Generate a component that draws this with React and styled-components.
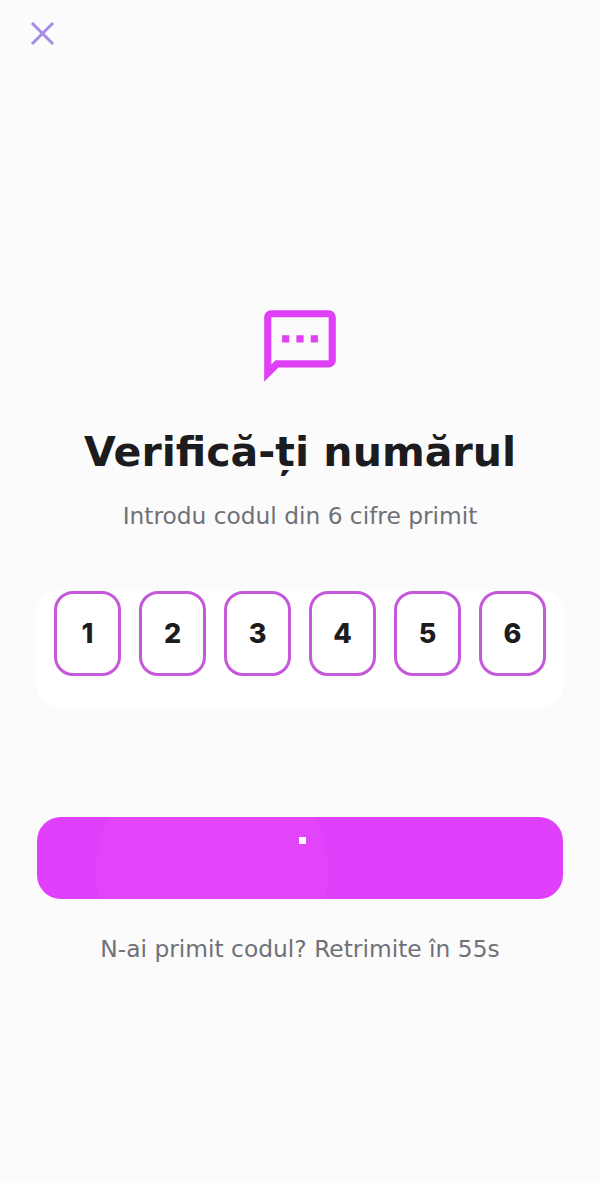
import styled, { createGlobalStyle } from 'styled-components';

const GlobalStyle = createGlobalStyle`
  html, body {
    margin: 0;
    padding: 0;
    background: #fbfbfc;
  }
`;

const Screen = styled.div`
  width: 600px;
  height: 1182px;
  overflow: hidden;
  display: flex;
  flex-direction: column;
  align-items: center;
  background: #fbfbfc;
  font-family: 'DejaVu Sans', sans-serif;
`;

const TopBar = styled.div`
  align-self: stretch;
  height: 303px;
  padding: 21px 0 0 30px;
  box-sizing: border-box;
`;

const CloseButton = styled.button`
  display: block;
  width: 25px;
  height: 25px;
  padding: 0;
  border: 0;
  background: none;
`;

const Title = styled.h1`
  margin: 39px 0 0;
  font-size: 41.1px;
  line-height: 48px;
  font-weight: 700;
  color: #1c1c1e;
`;

const Subtitle = styled.p`
  margin: 26px 0 0;
  font-size: 23.3px;
  line-height: 28px;
  color: #6f7177;
`;

const CodePanel = styled.div`
  margin-top: 60px;
  width: 528px;
  height: 118px;
  box-sizing: border-box;
  padding: 1px 18px 0;
  display: flex;
  justify-content: space-between;
  align-items: flex-start;
  background: #ffffff;
  border-radius: 24px;
`;

const Digit = styled.div`
  width: 67px;
  height: 85px;
  box-sizing: border-box;
  display: flex;
  align-items: center;
  justify-content: center;
  border: 3px solid #c558db;
  border-radius: 19px;
  background: #ffffff;
  font-family: Inter, sans-serif;
  font-size: 27px;
  font-weight: 800;
  color: #1c1c1e;
`;

const SubmitButton = styled.button`
  position: relative;
  overflow: hidden;
  margin-top: 109px;
  width: 526px;
  height: 82px;
  padding: 0;
  border: 0;
  border-radius: 24px;
  background: #e040fb;

  &::before {
    content: '';
    position: absolute;
    left: 59px;
    top: -62px;
    width: 232px;
    height: 232px;
    border-radius: 50%;
    background: #e244fb;
  }
`;

const Spinner = styled.span`
  position: absolute;
  left: 262px;
  top: 20px;
  width: 7px;
  height: 7px;
  background: #ffffff;
`;

const Resend = styled.p`
  margin: 36px 0 0;
  font-size: 23.35px;
  line-height: 28px;
  color: #6f7177;
`;

const digits = ['1', '2', '3', '4', '5', '6'];

const App = () => {
  return (
    <Screen>
      <GlobalStyle />
      <TopBar>
        <CloseButton aria-label="Închide">
          <svg width="25" height="25" viewBox="0 0 25 25" fill="none">
            <path d="M2 2 L23 23 M23 2 L2 23" stroke="#a78be4" strokeWidth="3" />
          </svg>
        </CloseButton>
      </TopBar>

      <svg width="86" height="86" viewBox="0 0 24 24" fill="#e040f5">
        <path d="M20 2H4c-1.1 0-2 .9-2 2v18l4-4h14c1.1 0 2-.9 2-2V4c0-1.1-.9-2-2-2zm0 14H5.17L4 17.17V4h16v12z" />
        <path d="M7 9h2v2H7zm4 0h2v2h-2zm4 0h2v2h-2z" />
      </svg>

      <Title>Verifică-ți numărul</Title>
      <Subtitle>Introdu codul din 6 cifre primit</Subtitle>

      <CodePanel>
        {digits.map((d) => (
          <Digit key={d}>{d}</Digit>
        ))}
      </CodePanel>

      <SubmitButton>
        <Spinner />
      </SubmitButton>

      <Resend>N-ai primit codul? Retrimite în 55s</Resend>
    </Screen>
  );
};

export default App;
